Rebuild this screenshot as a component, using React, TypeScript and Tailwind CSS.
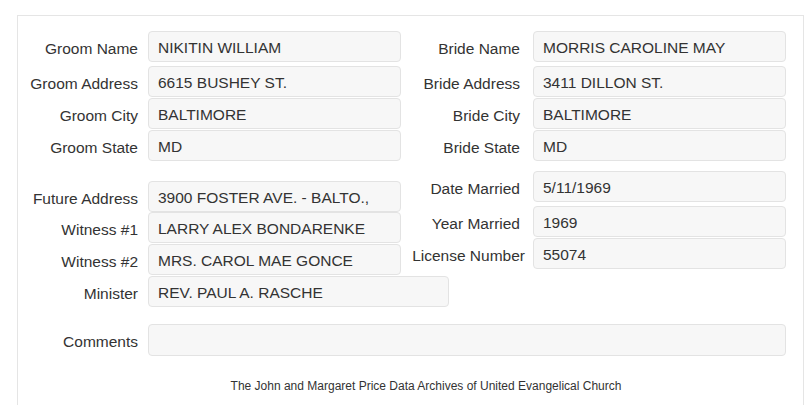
const font = { fontFamily: '"Liberation Sans", Arial, sans-serif' };

type RowProps = {
  label: string;
  value?: string;
  labelW: string;
  fieldW?: string;
  gap?: string;
  h?: string;
  className?: string;
};

function Row({ label, value, labelW, fieldW = "w-[253px]", gap = "ml-[10px]", h = "h-[31px]", className = "" }: RowProps) {
  return (
    <div className={`flex items-center ${className}`}>
      <div className={`${labelW} shrink-0 pt-[4px] text-right whitespace-nowrap`}>{label}</div>
      <div
        className={`${gap} ${fieldW} ${h} shrink-0 rounded-[4px] border border-[#e3e3e3] bg-[#f7f7f7] pl-[9px] pt-[3px] flex items-center whitespace-nowrap`}
      >
        {value}
      </div>
    </div>
  );
}

export default function App() {
  const L = "w-[120px]";
  const R = "w-[119px]";
  const rg = "ml-[13px]";
  return (
    <div className="bg-white h-[405px] overflow-hidden pt-[15px] pl-[17px] text-[15.5px] text-[#333]" style={font}>
      <div className="w-[787px] h-[420px] border border-b-0 border-[#e5e5e5]">
        {/* names and addresses */}
        <div className="flex pt-[15px]">
          <div className="w-[383px] flex flex-col">
            <Row label="Groom Name" value="NIKITIN WILLIAM" labelW={L} />
            <Row label="Groom Address" value="6615 BUSHEY ST." labelW={L} className="mt-[4px]" />
            <Row label="Groom City" value="BALTIMORE" labelW={L} className="mt-[1px]" />
            <Row label="Groom State" value="MD" labelW={L} className="mt-[1px]" />
          </div>
          <div className="flex flex-col">
            <Row label="Bride Name" value="MORRIS CAROLINE MAY" labelW={R} gap={rg} />
            <Row label="Bride Address" value="3411 DILLON ST." labelW={R} gap={rg} className="mt-[4px]" />
            <Row label="Bride City" value="BALTIMORE" labelW={R} gap={rg} className="mt-[1px]" />
            <Row label="Bride State" value="MD" labelW={R} gap={rg} className="mt-[1px]" />
          </div>
        </div>

        {/* marriage details */}
        <div className="flex items-start">
          <div className="w-[383px] flex flex-col pt-[20px]">
            <Row label="Future Address" value="3900 FOSTER AVE. - BALTO.," labelW={L} />
            <Row label="Witness #1" value="LARRY ALEX BONDARENKE" labelW={L} />
            <Row label="Witness #2" value="MRS. CAROL MAE GONCE" labelW={L} className="mt-[1px]" />
            <Row label="Minister" value="REV. PAUL A. RASCHE" labelW={L} fieldW="w-[301px]" className="mt-[1px]" />
          </div>
          <div className="flex flex-col pt-[10px]">
            <Row label="Date Married" value="5/11/1969" labelW={R} gap={rg} />
            <Row label="Year Married" value="1969" labelW={R} gap={rg} className="mt-[4px]" />
            <Row label="License Number" value="55074" labelW="w-[124px]" gap="ml-[8px]" className="mt-[1px]" />
          </div>
        </div>

        <Row label="Comments" labelW={L} fieldW="w-[638px]" h="h-[32px]" className="mt-[17px]" />

        <div className="pl-[31px] mt-[21px] text-center text-[12px]">
          The John and Margaret Price Data Archives of United Evangelical Church
        </div>
      </div>
    </div>
  );
}
